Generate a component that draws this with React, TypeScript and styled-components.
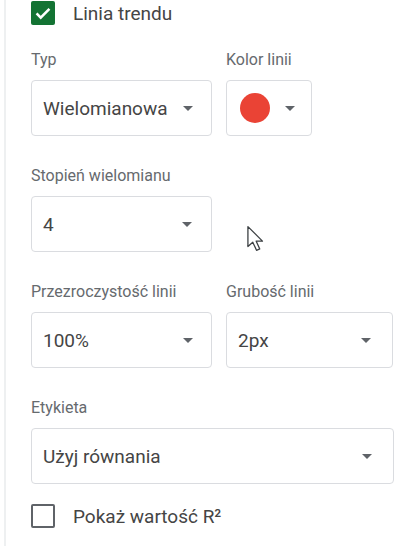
import React from "react";
import styled, { createGlobalStyle } from "styled-components";

const Global = createGlobalStyle`
  html, body { margin: 0; padding: 0; background: #ffffff; }
  body { font-family: Roboto, "Noto Sans", Arial, sans-serif; }
  * { box-sizing: border-box; }
`;

const Panel = styled.div`
  position: relative;
  width: 420px;
  height: 546px;
  overflow: hidden;
  background: #fff;
  border-left: 2px solid #eef0f1;
  margin-left: 4px;
  padding: 1px 0 0 25px;
  display: flex;
  flex-direction: column;
`;

const CheckRow = styled.label<{ $mt?: number }>`
  display: flex;
  align-items: center;
  gap: 18px;
  height: 24px;
  margin-top: ${(p) => p.$mt ?? 0}px;
  font-size: 19px;
  color: #454545;
`;

const Box = styled.span<{ $checked?: boolean }>`
  width: 24px;
  height: 24px;
  border-radius: 2px;
  display: flex;
  align-items: center;
  justify-content: center;
  background: ${(p) => (p.$checked ? "#137333" : "#fff")};
  border: ${(p) => (p.$checked ? "none" : "2px solid #5f6368")};
`;

const Row = styled.div`
  display: grid;
  grid-template-columns: 180px auto;
  column-gap: 15px;
  justify-content: start;
  margin-top: 25px;
  & + & {
    margin-top: 30px;
  }
`;

const Field = styled.div<{ $span?: boolean }>`
  display: flex;
  flex-direction: column;
  align-items: flex-start;
  grid-column: ${(p) => (p.$span ? "1 / span 2" : "auto")};
`;

const Label = styled.div`
  font-size: 16px;
  line-height: 20px;
  color: #666a6e;
  margin-bottom: 10px;
`;

const Select = styled.div<{ $w: number; $pr?: number }>`
  width: ${(p) => p.$w}px;
  height: 56px;
  border: 1px solid #dadce0;
  border-radius: 4px;
  display: flex;
  align-items: center;
  justify-content: space-between;
  padding: 0 ${(p) => p.$pr ?? 18}px 0 11px;
  font-size: 19px;
  color: #454545;
`;

const Swatch = styled.span`
  width: 30px;
  height: 30px;
  border-radius: 50%;
  background: #ea4335;
  margin-left: 2px;
`;

const Arrow = styled.span`
  width: 0;
  height: 0;
  border-left: 5px solid transparent;
  border-right: 5px solid transparent;
  border-top: 5px solid #5f6368;
`;

const Cursor = styled.svg`
  position: absolute;
  left: 240px;
  top: 225px;
`;

const Sel = ({ w, text, pr }: { w: number; text: string; pr?: number }) => (
  <Select $w={w} $pr={pr}>
    <span>{text}</span>
    <Arrow />
  </Select>
);

export default function App() {
  return (
    <>
      <Global />
      <Panel>
        <CheckRow>
          <Box $checked>
            <svg width="22" height="22" viewBox="0 0 24 24">
              <path d="M5 12.5l4.5 4.5L19 7.5" fill="none" stroke="#fff" strokeWidth="2.8" />
            </svg>
          </Box>
          Linia trendu
        </CheckRow>

        <Row>
          <Field>
            <Label>Typ</Label>
            <Sel w={181} text="Wielomianowa" />
          </Field>
          <Field>
            <Label>Kolor linii</Label>
            <Select $w={86} $pr={16}>
              <Swatch />
              <Arrow />
            </Select>
          </Field>
        </Row>

        <Row>
          <Field>
            <Label>Stopień wielomianu</Label>
            <Sel w={181} text="4" pr={19} />
          </Field>
        </Row>

        <Row>
          <Field>
            <Label>Przezroczystość linii</Label>
            <Sel w={181} text="100%" />
          </Field>
          <Field>
            <Label>Grubość linii</Label>
            <Sel w={167} text="2px" pr={21} />
          </Field>
        </Row>

        <Row>
          <Field $span>
            <Label>Etykieta</Label>
            <Sel w={363} text="Użyj równania" pr={21} />
          </Field>
        </Row>

        <CheckRow $mt={20}>
          <Box />
          Pokaż wartość R²
        </CheckRow>

        <Cursor width="20" height="28" viewBox="0 0 18 26">
          <path
            d="M1.5 1.5 L1.5 20 L6 16 L9.5 23.5 L12.5 22.2 L9.2 15 L15 15 Z"
            fill="#fff"
            stroke="#3c4043"
            strokeWidth="1.2"
            strokeLinejoin="round"
          />
        </Cursor>
      </Panel>
    </>
  );
}
